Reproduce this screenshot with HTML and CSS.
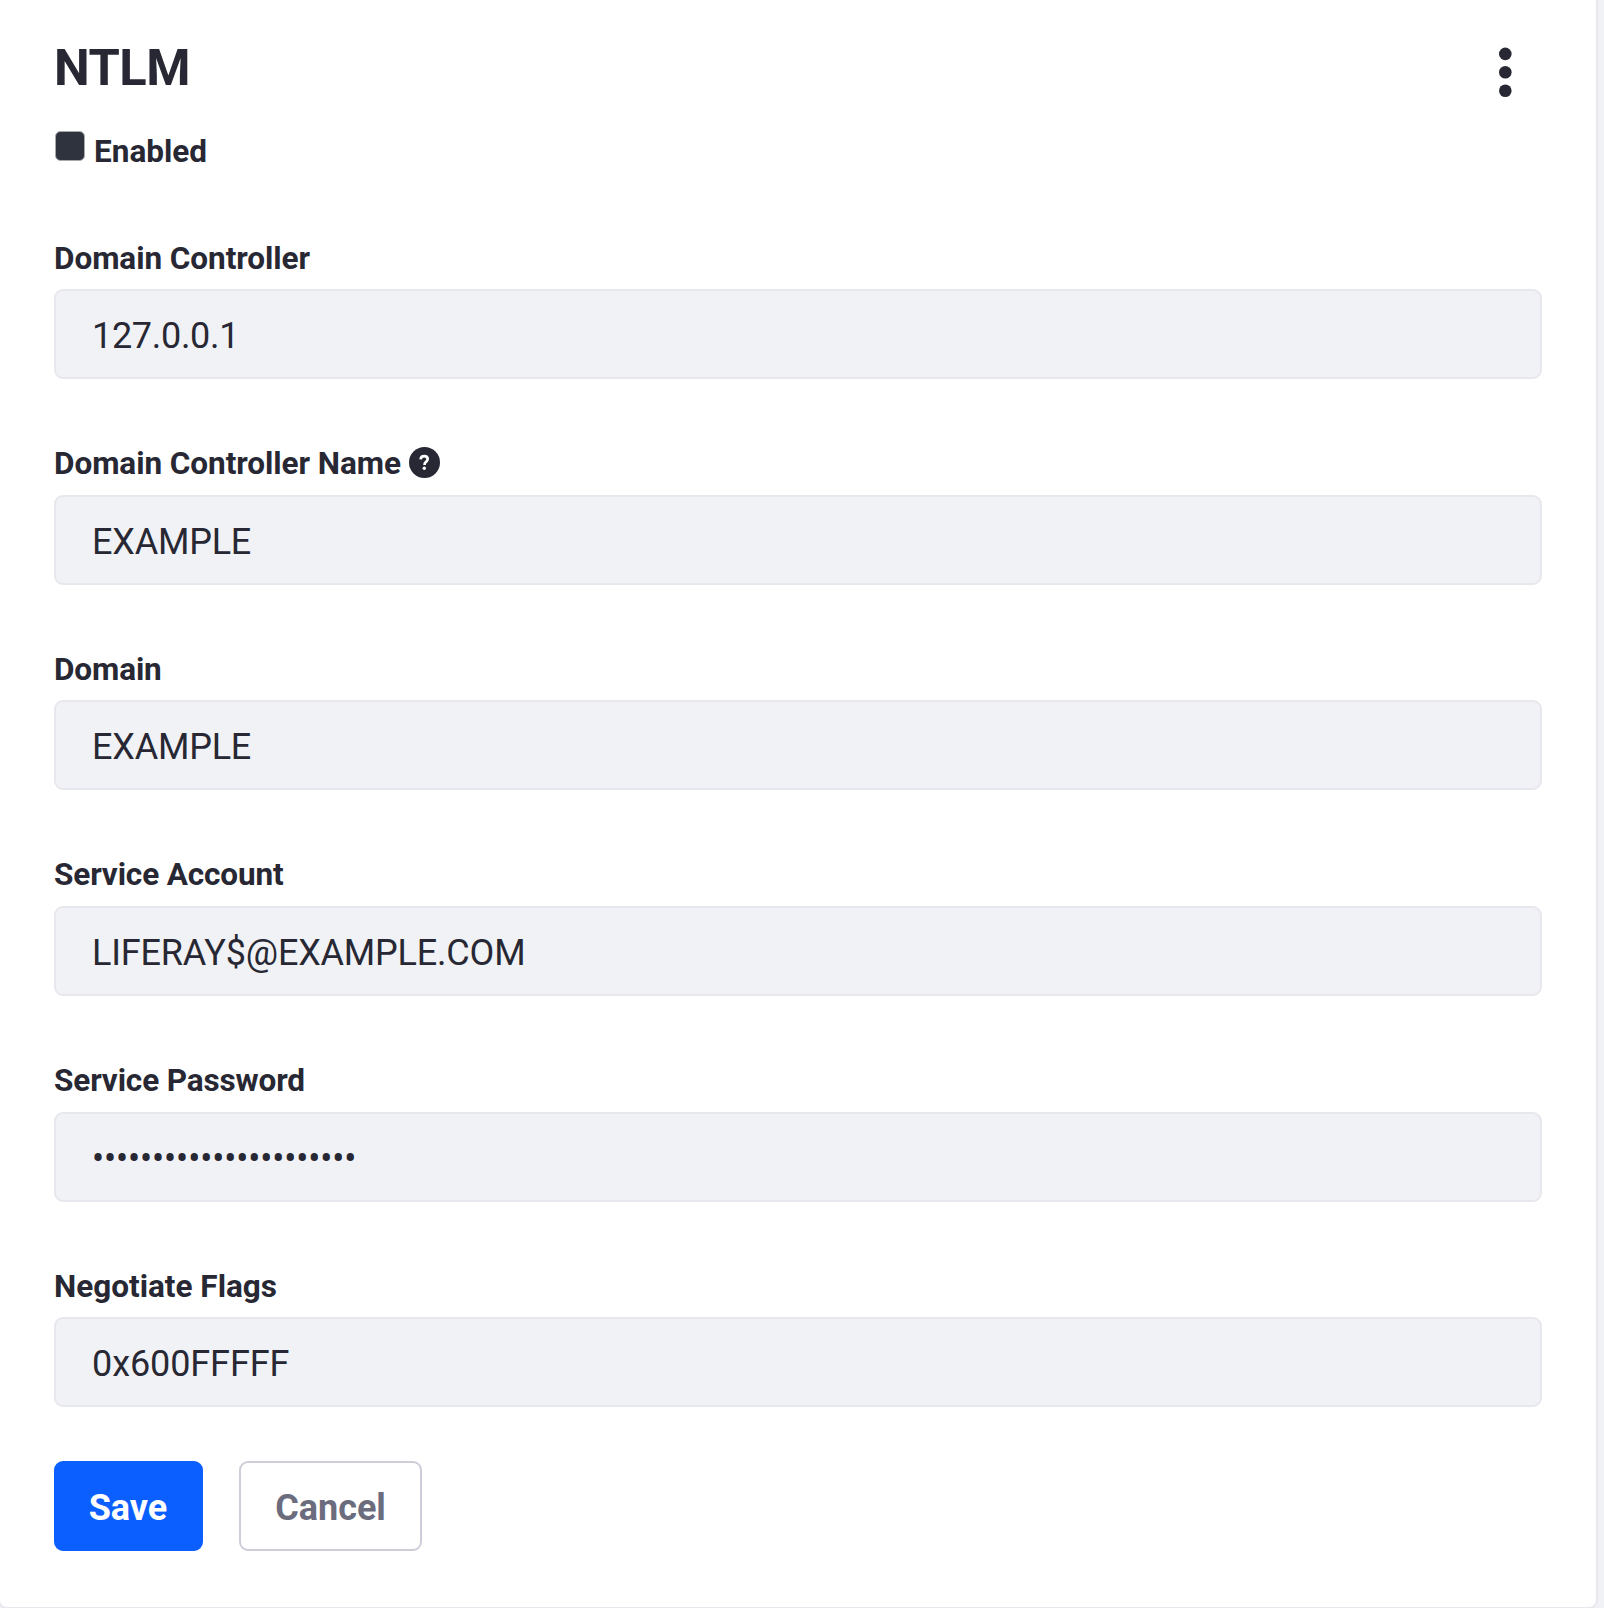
FILE: index.html
```html
<!DOCTYPE html>
<html lang="en">
<head>
<meta charset="utf-8">
<title>NTLM</title>
<link rel="stylesheet" href="styles.css">
</head>
<body>
<main class="sheet">
  <header class="sheet-header">
    <h1 class="sheet-title">NTLM</h1>
    <button class="menu-button" type="button" aria-label="Options">
      <svg width="14" height="52" viewBox="0 0 14 52"><circle cx="7.3" cy="7.9" r="6.3"/><circle cx="7.3" cy="26.3" r="6.3"/><circle cx="7.3" cy="44.8" r="6.3"/></svg>
    </button>
  </header>
  <form class="form">
    <label class="check"><input class="check-input" type="checkbox"><span class="check-text">Enabled</span></label>
    <div class="field">
      <label class="label" for="controller">Domain Controller</label>
      <input class="control control-ip" id="controller" type="text" value="127.0.0.1">
    </div>
    <div class="field">
      <label class="label" for="name">Domain Controller Name
        <svg class="help" viewBox="0 0 31 31"><circle cx="15.5" cy="15.5" r="15.5" fill="#272833"/><path d="M11.6 12.4c.2-2.1 1.5-3.2 3.6-3.2s3.5 1.1 3.5 2.9c0 1.3-.7 2-1.7 2.8-1.1.8-1.5 1.5-1.5 3" fill="none" stroke="#fff" stroke-width="2.7"/><circle cx="15.3" cy="21.2" r="1.7" fill="#fff"/></svg>
      </label>
      <input class="control" id="name" type="text" value="EXAMPLE">
    </div>
    <div class="field">
      <label class="label label-tight" for="domain">Domain</label>
      <input class="control" id="domain" type="text" value="EXAMPLE">
    </div>
    <div class="field">
      <label class="label label-tight" for="account">Service Account</label>
      <input class="control" id="account" type="text" value="LIFERAY$@EXAMPLE.COM">
    </div>
    <div class="field">
      <label class="label label-tight" for="password">Service Password</label>
      <input class="control control-password" id="password" type="password" value="abcdefghijklmnopqrstuv">
    </div>
    <div class="field field-last">
      <label class="label label-normal" for="flags">Negotiate Flags</label>
      <input class="control control-flags" id="flags" type="text" value="0x600FFFFF">
    </div>
    <div class="actions">
      <button class="btn btn-primary" type="button">Save</button>
      <button class="btn btn-secondary" type="button">Cancel</button>
    </div>
  </form>
</main>
</body>
</html>
```
FILE: styles.css
```css
* {
  box-sizing: border-box;
}

html {
  height: 100%;
  overflow: hidden;
}

body {
  margin: 0;
  height: 100%;
  overflow: hidden;
  background: #f1f2f5;
  color: #272833;
  font-family: Roboto, "Liberation Sans", sans-serif;
}

.sheet {
  width: 1600px;
  height: 1609px;
  margin-left: -2px;
  padding: 34px 54px 0;
  background: #fff;
  border: 2px solid #e7e7ed;
  border-top: 0;
  border-radius: 0 0 9px 9px;
}

.sheet-header {
  display: flex;
  justify-content: space-between;
  height: 85px;
}

.sheet-title {
  margin: 0;
  font-size: 50.6px;
  font-weight: 700;
  line-height: 68px;
  letter-spacing: -0.5px;
}

.menu-button {
  width: 14px;
  height: 52px;
  margin: 12px 30px 0 0;
  padding: 0;
  border: 0;
  background: none;
}

.menu-button svg {
  display: block;
  fill: #272833;
}

.check {
  display: flex;
  align-items: flex-start;
  height: 117.6px;
}

.check-input {
  appearance: none;
  width: 30px;
  height: 30px;
  margin: 12px 9px 0 1px;
  border: 1px solid #a9aaae;
  border-radius: 5.5px;
  background: #2e333d;
}

.check-text {
  font-size: 31.5px;
  font-weight: 700;
  line-height: 48px;
  padding-top: 9px;
}

.field {
  height: 205.6px;
}

.field-last {
  height: 196.4px;
}

.label {
  display: flex;
  align-items: center;
  gap: 8px;
  height: 43px;
  margin-bottom: 9.6px;
  font-size: 31.5px;
  font-weight: 700;
  line-height: 43px;
  letter-spacing: -0.06px;
}

.label-tight {
  letter-spacing: -0.13px;
}

.label-normal {
  letter-spacing: 0;
}

.help {
  width: 31px;
  height: 31px;
  margin-top: -2px;
}

.control {
  display: block;
  width: 100%;
  height: 90px;
  padding: 4px 36px 0;
  border: 2px solid #e7e7ed;
  border-radius: 9px;
  background: #f1f2f5;
  color: #272833;
  font: 400 36px/54px Roboto, "Liberation Sans", sans-serif;
  letter-spacing: -0.2px;
  outline: 0;
}

.control-ip {
  letter-spacing: -0.3px;
}

.control-password {
  letter-spacing: -0.13px;
}

.control-flags {
  letter-spacing: -0.1px;
}

.actions {
  display: flex;
  gap: 36px;
}

.btn {
  height: 90px;
  padding: 4px 0 0;
  border: 2px solid transparent;
  border-radius: 9px;
  font: 700 36px/54px Roboto, "Liberation Sans", sans-serif;
}

.btn-primary {
  width: 149px;
  padding-right: 1px;
  background: #0b5fff;
  border-color: #0b5fff;
  color: #fff;
}

.btn-secondary {
  width: 183px;
  background: #fff;
  border-color: #cdced9;
  color: #6b6c7e;
}
```
